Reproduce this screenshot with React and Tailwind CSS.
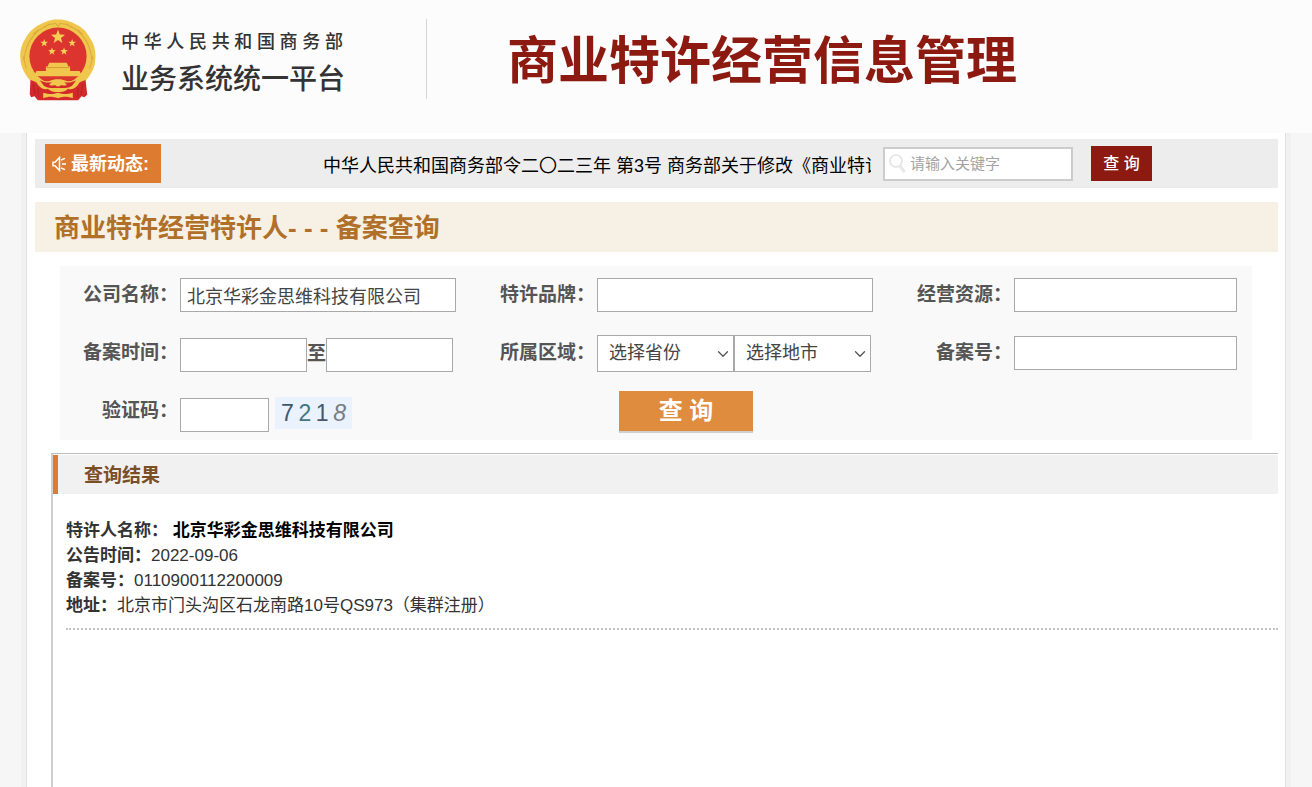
import { ChevronDown } from "lucide-react";

function starPoints(cx, cy, r) {
  const pts = [];
  for (let i = 0; i < 10; i++) {
    const radius = i % 2 === 0 ? r : r * 0.42;
    const a = (Math.PI / 5) * i - Math.PI / 2;
    pts.push(`${(cx + radius * Math.cos(a)).toFixed(1)},${(cy + radius * Math.sin(a)).toFixed(1)}`);
  }
  return pts.join(" ");
}

function Emblem() {
  return (
    <svg viewBox="17 21 226 243" className="h-[82px] w-[76px] shrink-0" role="img" aria-label="国徽">
      <path
        d="M130 22 C152 21 171 29 185 38 C204 46 216 61 225 77 C238 94 243 117 241 138 C241 164 229 184 214 202 L190 228 H70 L46 202 C31 184 19 164 18 138 C16 117 22 94 34 77 C44 61 57 46 75 38 C89 29 108 21 130 22 Z"
        fill="#eec74c"
      />
      <path
        d="M30 140 C33 85 74 38 122 34 M230 140 C227 85 186 38 138 34 M36 168 L26 132 M224 168 L234 132 M46 84 L36 108 M214 84 L224 108 M72 52 L56 66 M188 52 L204 66 M104 34 L90 46 M156 34 L170 46 M122 32 L130 42 L138 32"
        fill="none"
        stroke="#dcaa38"
        strokeWidth="3"
      />
      <circle cx="130" cy="131" r="85" fill="#dc3530" />
      <g fill="#f6cf55">
        <polygon points={starPoints(130, 74, 22)} />
        <polygon points={starPoints(89, 92, 12)} />
        <polygon points={starPoints(172, 92, 12)} />
        <polygon points={starPoints(112, 117, 12)} />
        <polygon points={starPoints(148, 117, 12)} />
      </g>
      <path d="M104 151 H156 L161 162 H166 V175 H194 L202 191 H58 L66 175 H94 V162 H99 Z" fill="#f1c64d" />
      <path d="M96 165 H164" stroke="#d79c32" strokeWidth="3" />
      <path
        d="M48 202 C62 206 76 214 90 226 H170 C184 214 198 206 212 202 L217 246 L208 253 L200 250 L190 262 L176 262 H84 L70 262 L60 250 L50 253 L46 244 Z"
        fill="#d4292b"
      />
      <path
        d="M58 192 C76 200 88 206 98 206 C106 206 112 200 130 200 C148 200 154 206 162 206 C172 206 184 200 202 192 L190 216 C180 228 168 232 160 228 C152 236 142 238 130 238 C118 238 108 236 100 228 C92 232 80 228 70 216 Z"
        fill="#f1c64d"
      />
      <path
        d="M76 203 C90 210 104 212 112 207 L104 216 C110 222 118 216 130 216 C142 216 150 222 156 216 L148 207 C156 212 170 210 184 203 L172 219 C162 226 154 226 130 226 C106 226 98 226 88 219 Z"
        fill="#d4292b"
      />
      <circle cx="130" cy="211" r="10" fill="#f1c64d" />
      <path d="M86 240 C102 244 112 246 130 240 C148 246 158 244 174 240 V256 C158 250 146 250 130 256 C114 250 102 250 86 256 Z" fill="#f1c64d" />
      <path d="M56 214 L62 246 M204 214 L198 246 M70 226 L72 254 M190 226 L188 254" stroke="#b32327" strokeWidth="3" />
    </svg>
  );
}

function Horn() {
  return (
    <svg viewBox="0 0 14 16" className="h-4 w-3.5 shrink-0" fill="none" stroke="#fff" strokeWidth="1.5" aria-hidden="true">
      <path d="M1 6.2H3L7.5 1.5V14.5L3 9.8H1Z" />
      <path d="M10 8H14M9 4L13 2.4M9 12L13 13.6" />
    </svg>
  );
}

function Magnifier() {
  return (
    <svg viewBox="0 0 18 20" className="absolute top-[7px] left-[5px] h-5 w-[18px]" fill="none" stroke="#e8e8e8" aria-hidden="true">
      <circle cx="8" cy="7" r="6" strokeWidth="2" />
      <path d="M12 12L16.5 18" strokeWidth="3" />
    </svg>
  );
}

const field = "h-[34px] min-w-0 border border-[#a9a9a9] bg-white px-[6px] text-lg text-[#444] outline-none";
const label = "pt-px pr-[2px] text-right text-[19px] font-bold text-[#555]";

function RegionSelect({ name, text }) {
  return (
    <span className="relative flex flex-1">
      <select
        aria-label={name}
        className="h-[37px] w-full appearance-none border border-[#a9a9a9] bg-white pl-[11px] text-lg text-[#444] outline-none"
      >
        <option>{text}</option>
      </select>
      <ChevronDown className="pointer-events-none absolute top-[10px] right-[2px] size-[18px] text-[#555]" strokeWidth={1.75} />
    </span>
  );
}

const record = [
  ["公告时间：", "2022-09-06"],
  ["备案号：", "0110900112200009"],
  ["地址：", "北京市门头沟区石龙南路10号QS973（集群注册）"],
];

export default function App() {
  return (
    <div className="flex min-h-screen flex-col bg-[#f6f6f6] font-['Liberation_Sans','Noto_Sans_CJK_SC',sans-serif]">
      <header className="flex h-[133px] items-start bg-[#fcfcfc] pt-[19px] pl-5">
        <Emblem />
        <div className="ml-[25px] flex w-[222px] flex-col pt-[10px] text-[#333]">
          <p className="flex justify-between text-lg leading-[26px] font-medium">
            {"中华人民共和国商务部".split("").map((c, i) => (
              <span key={i}>{c}</span>
            ))}
          </p>
          <p className="mt-2 text-[28px] leading-[34px] font-medium whitespace-nowrap">业务系统统一平台</p>
        </div>
        <div className="ml-[83px] h-20 w-px bg-[#d5d5d5]" />
        <h1 className="ml-[80px] pt-[11px] text-[51px] leading-[64px] font-bold whitespace-nowrap text-[#8c1a11]">
          商业特许经营信息管理
        </h1>
      </header>

      <main className="mx-[26px] flex flex-1 flex-col border-x border-[#e0e0e0] bg-white pt-[6px] pr-[7px] pl-2 shadow-[0_0_0_5px_#f1f1f1] [clip-path:inset(0_-6px)]">
        <div className="flex h-[49px] items-center bg-[#ededed] pr-[126px] pl-[10px]">
          <strong className="flex h-[39px] w-[116px] shrink-0 items-center gap-[5px] bg-[#dd7c30] pt-px pl-[7px] text-lg whitespace-nowrap text-white">
            <Horn />
            最新动态:
          </strong>
          <div className="mr-[12px] ml-[25px] flex-1 overflow-hidden pt-1 pl-[137px] text-lg whitespace-nowrap text-black">
            中华人民共和国商务部令二〇二三年 第3号 商务部关于修改《商业特许
          </div>
          <div className="relative">
            <input
              type="text"
              aria-label="关键字"
              placeholder="请输入关键字"
              className="block h-[34px] w-[190px] border-2 border-[#ccc] bg-white pl-[25px] text-[15px] text-[#444] outline-none placeholder:text-[#a3a3a3]"
            />
            <Magnifier />
          </div>
          <button type="button" className="ml-[18px] h-[35px] w-[61px] bg-[#8c1a11] text-base font-medium text-white">
            查 询
          </button>
        </div>

        <h2 className="mt-[14px] h-[50px] bg-[#f7f0e5] pl-[19px] text-[26px] leading-[52px] font-bold text-[#b07029]">
          商业特许经营特许人- - - 备案查询
        </h2>

        <form
          onSubmit={(e) => e.preventDefault()}
          className="mr-[26px] mt-[14px] ml-[25px] grid auto-rows-[58px] grid-cols-[120px_minmax(0,297fr)_120px_minmax(0,297fr)_120px_minmax(0,238fr)] items-center bg-[#f9f9f9]"
        >
          <label htmlFor="company" className={label}>公司名称：</label>
          <input id="company" type="text" defaultValue="北京华彩金思维科技有限公司" className={`${field} mr-[21px]`} />
          <label htmlFor="brand" className={label}>特许品牌：</label>
          <input id="brand" type="text" className={`${field} mr-[21px]`} />
          <label htmlFor="resource" className={label}>经营资源：</label>
          <input id="resource" type="text" className={`${field} mr-[15px]`} />

          <label htmlFor="from" className={label}>备案时间：</label>
          <div className="mr-6 flex items-center pt-[3px]">
            <input id="from" type="text" className={`${field} w-0 flex-1`} />
            <label htmlFor="to" className="text-[19px] font-bold text-[#555]">至</label>
            <input id="to" type="text" className={`${field} w-0 flex-1`} />
          </div>
          <span className={label}>所属区域：</span>
          <div className="mr-[23px] flex">
            <RegionSelect name="选择省份" text="选择省份" />
            <RegionSelect name="选择地市" text="选择地市" />
          </div>
          <label htmlFor="record" className={label}>备案号：</label>
          <input id="record" type="text" className={`${field} mr-[15px]`} />

          <label htmlFor="code" className={label}>验证码：</label>
          <div className="flex items-center pt-[7px]">
            <input id="code" type="text" className={`${field} w-[89px]`} />
            <span className="mb-1 ml-[6px] flex h-8 w-[77px] items-center justify-between bg-[#e9f2fd] px-[6px] text-[23px] leading-8">
              <span className="text-[#3d5670]">7</span>
              <span className="text-[#41757f]">2</span>
              <span className="text-[#4b5568]">1</span>
              <span className="text-[#777c80] italic">8</span>
            </span>
          </div>
          <button
            type="submit"
            className="col-start-4 ml-[22px] h-10 w-[134px] bg-[#df8c3e] text-2xl font-bold text-white shadow-[0_2px_0_#cfcfcf]"
          >
            查 询
          </button>
        </form>

        <section className="mt-[13px] ml-4 flex-1 border-t border-l-2 border-t-[#bcbcbc] border-l-[#cfcfcf] pt-px">
          <h3 className="h-[39px] border-l-[5px] border-[#dd7c30] bg-[#f1f1f1] pl-[26px] text-[19px] leading-[41px] font-bold text-[#7b4f26]">
            查询结果
          </h3>
          <div className="ml-[13px] border-b-2 border-dotted border-[#c4c4c4] pt-6 pb-[10px] text-[17px] leading-[25px] text-[#333]">
            <p>
              <b>特许人名称：</b> <strong className="text-black">北京华彩金思维科技有限公司</strong>
            </p>
            {record.map(([name, value]) => (
              <p key={name}>
                <b>{name}</b>
                {value}
              </p>
            ))}
          </div>
        </section>
      </main>
    </div>
  );
}
